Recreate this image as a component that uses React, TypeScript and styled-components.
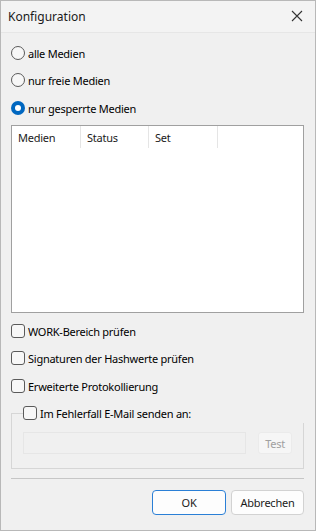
import React from "react";
import styled, { createGlobalStyle } from "styled-components";

const Global = createGlobalStyle`
  html, body { margin: 0; padding: 0; background: #f0f0f0; }
  body { font-family: "Noto Sans", "Liberation Sans", sans-serif; font-size: 11px; letter-spacing: -0.25px; color: #000; }
  * { box-sizing: border-box; }
`;

const Window = styled.div`
  width: 316px;
  height: 531px;
  border: 1px solid #b8b8b8;
  background: #f0f0f0;
  display: flex;
  flex-direction: column;
`;

const TitleBar = styled.div`
  height: 32px;
  flex: none;
  display: flex;
  align-items: center;
  justify-content: space-between;
  padding: 0 12px 0 7px;
  background: #f3f3f3;
  border-bottom: 1px solid #e6e6e6;
  font-size: 12px;
  letter-spacing: 0;
  color: #1a1a1a;
`;

const CloseIcon = styled.svg`
  width: 12px;
  height: 12px;
  margin-top: -1px;
`;

const Content = styled.div`
  flex: 1;
  display: flex;
  flex-direction: column;
  padding: 10px 11px 0 10px;
`;

const OptionRow = styled.label<{ $gap?: number }>`
  height: 20px;
  display: flex;
  align-items: center;
  gap: 3px;
  margin-top: ${(p) => p.$gap ?? 0}px;
  white-space: nowrap;
`;

const Radio = styled.span<{ $checked?: boolean }>`
  width: 14px;
  height: 14px;
  border-radius: 50%;
  flex: none;
  display: flex;
  align-items: center;
  justify-content: center;
  border: ${(p) => (p.$checked ? "none" : "1px solid #5a5a5a")};
  background: ${(p) => (p.$checked ? "#0067c0" : "#f7f7f7")};
  &::after {
    content: "";
    display: ${(p) => (p.$checked ? "block" : "none")};
    width: 6px;
    height: 6px;
    border-radius: 50%;
    background: #fff;
  }
`;

const Check = styled.span`
  width: 14px;
  height: 14px;
  border-radius: 3px;
  flex: none;
  border: 1px solid #5a5a5a;
  background: #f7f7f7;
`;

const ListBox = styled.div`
  margin-top: 7px;
  height: 188px;
  border: 1px solid #a0a0a0;
  background: #fff;
`;

const Header = styled.div`
  display: flex;
  height: 22px;
`;

const HeaderCell = styled.div<{ $w: number }>`
  width: ${(p) => p.$w}px;
  padding: 4px 0 0 6px;
  border-right: 1px solid #e5e5e5;
  color: #1a1a1a;
`;

const GroupBox = styled.fieldset`
  margin: 7px 0 0 0;
  padding: 0 11px 14px 11px;
  border: 1px solid #d6d6d6;
  min-width: 0;
`;

const GroupLegend = styled.legend`
  padding: 0;
  width: calc(100% + 12px);
  height: 20px;
  display: flex;
`;

const GroupRow = styled.div`
  display: flex;
  align-items: center;
  gap: 12px;
  margin-top: 9px;
`;

const TextInput = styled.div`
  width: 225px;
  height: 22px;
  border: 1px solid #e6e6e6;
  background: #f0f0f0;
`;

const SmallButton = styled.div`
  width: 34px;
  height: 22px;
  border: 1px solid #ebebeb;
  border-radius: 3px;
  background: #f6f6f6;
  color: #a0a0a0;
  display: flex;
  align-items: center;
  justify-content: center;
`;

const Separator = styled.div`
  margin-top: 9px;
  height: 1px;
  background: #c6c6c6;
`;

const ButtonBar = styled.div`
  display: flex;
  justify-content: flex-end;
  gap: 5px;
  margin-top: 11px;
`;

const Button = styled.div<{ $primary?: boolean }>`
  width: ${(p) => (p.$primary ? 74 : 73)}px;
  height: 25px;
  border-radius: 4px;
  border: 1px solid ${(p) => (p.$primary ? "#2a7fd6" : "#d2d2d2")};
  background: #fdfdfd;
  display: flex;
  align-items: center;
  justify-content: center;
  color: #1a1a1a;
`;

export default function App() {
  return (
    <>
      <Global />
      <Window>
        <TitleBar>
          <span>Konfiguration</span>
          <CloseIcon viewBox="0 0 12 12">
            <path d="M1 1 L11 11 M11 1 L1 11" stroke="#333" strokeWidth="1.1" fill="none" />
          </CloseIcon>
        </TitleBar>
        <Content>
          <OptionRow>
            <Radio /> alle Medien
          </OptionRow>
          <OptionRow $gap={7}>
            <Radio /> nur freie Medien
          </OptionRow>
          <OptionRow $gap={8}>
            <Radio $checked /> nur gesperrte Medien
          </OptionRow>
          <ListBox>
            <Header>
              <HeaderCell $w={69}>Medien</HeaderCell>
              <HeaderCell $w={68}>Status</HeaderCell>
              <HeaderCell $w={69}>Set</HeaderCell>
            </Header>
          </ListBox>
          <OptionRow $gap={8}>
            <Check /> WORK-Bereich prüfen
          </OptionRow>
          <OptionRow $gap={7}>
            <Check /> Signaturen der Hashwerte prüfen
          </OptionRow>
          <OptionRow $gap={8}>
            <Check /> Erweiterte Protokollierung
          </OptionRow>
          <GroupBox>
            <GroupLegend>
              <OptionRow>
                <Check /> Im Fehlerfall E-Mail senden an:
              </OptionRow>
            </GroupLegend>
            <GroupRow>
              <TextInput />
              <SmallButton>Test</SmallButton>
            </GroupRow>
          </GroupBox>
          <Separator />
          <ButtonBar>
            <Button $primary>OK</Button>
            <Button>Abbrechen</Button>
          </ButtonBar>
        </Content>
      </Window>
    </>
  );
}
